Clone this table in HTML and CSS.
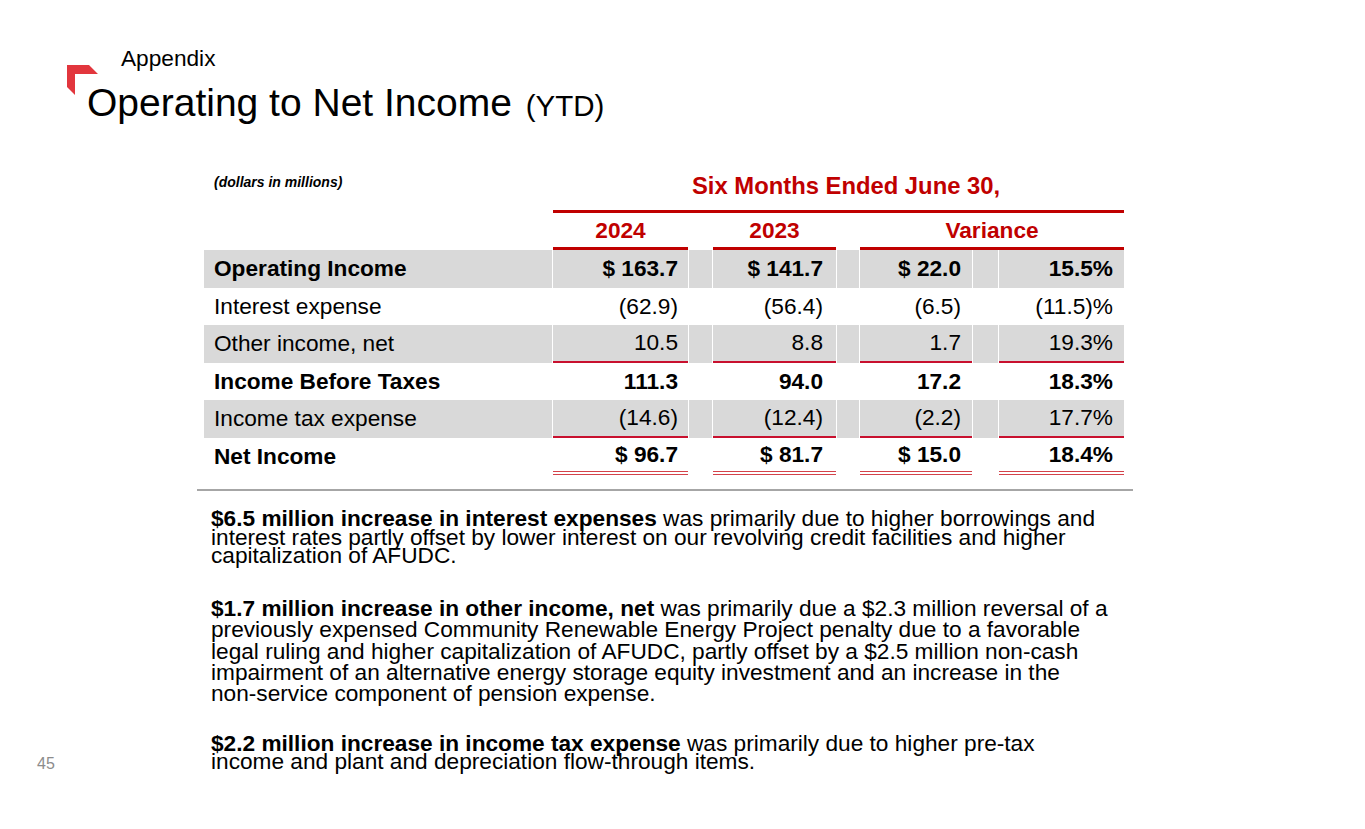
FILE: index.html
```html
<!DOCTYPE html>
<html lang="en">
<head>
<meta charset="utf-8">
<title>Operating to Net Income (YTD)</title>
<link rel="stylesheet" href="styles.css">
</head>
<body>
<div class="slide">
  <header class="head">
    <svg class="logo" width="33" height="33" viewBox="0 0 33 33" aria-hidden="true">
      <polygon points="1,1 23,1 32,10 9,10 9,31 1,23" fill="#e2363d"/>
    </svg>
    <div class="kicker">Appendix</div>
    <h1 class="title">Operating to Net Income <span class="ytd">(YTD)</span></h1>
  </header>

  <section class="fin">
    <div class="grid">
      <div class="units">(dollars in millions)</div>
      <div class="period">Six Months Ended June 30,</div>
      <div class="topline"></div>

      <div class="hd"></div>
      <div class="hd yr">2024</div>
      <div class="hd"></div>
      <div class="hd yr">2023</div>
      <div class="hd"></div>
      <div class="hd yr span2">Variance</div>

      <div class="c lab gray bold">Operating Income</div>
      <div class="c val v1 gray bold">$ 163.7</div>
      <div class="c gray"></div>
      <div class="c val v2 gray bold">$ 141.7</div>
      <div class="c gray"></div>
      <div class="c val gray bold">$ 22.0</div>
      <div class="c gray"></div>
      <div class="c val gray bold">15.5%</div>

      <div class="c lab">Interest expense</div>
      <div class="c val v1">(62.9)</div>
      <div class="c"></div>
      <div class="c val v2">(56.4)</div>
      <div class="c"></div>
      <div class="c val">(6.5)</div>
      <div class="c"></div>
      <div class="c val">(11.5)%</div>

      <div class="c lab gray">Other income, net</div>
      <div class="c val v1 gray ul">10.5</div>
      <div class="c gray"></div>
      <div class="c val v2 gray ul">8.8</div>
      <div class="c gray"></div>
      <div class="c val gray ul">1.7</div>
      <div class="c gray"></div>
      <div class="c val gray ul">19.3%</div>

      <div class="c lab bold">Income Before Taxes</div>
      <div class="c val v1 bold">111.3</div>
      <div class="c"></div>
      <div class="c val v2 bold">94.0</div>
      <div class="c"></div>
      <div class="c val bold">17.2</div>
      <div class="c"></div>
      <div class="c val bold">18.3%</div>

      <div class="c lab gray">Income tax expense</div>
      <div class="c val v1 gray ul">(14.6)</div>
      <div class="c gray"></div>
      <div class="c val v2 gray ul">(12.4)</div>
      <div class="c gray"></div>
      <div class="c val gray ul">(2.2)</div>
      <div class="c gray"></div>
      <div class="c val gray ul">17.7%</div>

      <div class="c lab bold">Net Income</div>
      <div class="c val v1 bold dbl">$ 96.7</div>
      <div class="c"></div>
      <div class="c val v2 bold dbl">$ 81.7</div>
      <div class="c"></div>
      <div class="c val bold dbl">$ 15.0</div>
      <div class="c"></div>
      <div class="c val bold dbl">18.4%</div>
    </div>
    <div class="rule"></div>
  </section>

  <section class="notes">
    <div class="pg">45</div>
    <div class="paras">
      <p class="p1"><b>$6.5 million increase in interest expenses</b> was primarily due to higher borrowings and<br>interest rates partly offset by lower interest on our revolving credit facilities and higher<br>capitalization of AFUDC.</p>
      <p class="p2"><b>$1.7 million increase in other income, net</b> was primarily due a $2.3 million reversal of a<br>previously expensed Community Renewable Energy Project penalty due to a favorable<br>legal ruling and higher capitalization of AFUDC, partly offset by a $2.5 million non-cash<br>impairment of an alternative energy storage equity investment and an increase in the<br>non-service component of pension expense.</p>
      <p class="p3"><b>$2.2 million increase in income tax expense</b> was primarily due to higher pre-tax<br>income and plant and depreciation flow-through items.</p>
    </div>
  </section>
</div>
</body>
</html>
```

FILE: styles.css
```css
* { box-sizing: border-box; }
html, body { margin: 0; padding: 0; background: #fff; }
body { font-family: "Liberation Sans", Arial, sans-serif; color: #000; }

.slide { width: 1365px; height: 829px; overflow: hidden; }

.head { position: relative; padding: 45px 0 0 87px; }
.logo { position: absolute; left: 66px; top: 64px; }
.kicker { margin-left: 34px; font-size: 22.67px; line-height: 26px; }
.title { margin: 10px 0 0; height: 44px; font-weight: normal; font-size: 39px; line-height: 44px; white-space: nowrap; }
.ytd { font-size: 29.5px; line-height: 0; margin-left: 3px; }

.fin { margin: 45px 0 0 204px; width: 920px; }
.grid {
  display: grid;
  grid-template-columns: 348px 135px 23px 123px 22px 112px 25px 125px;
  grid-template-rows: 40px 3px 37px repeat(6, 37.5px);
  column-gap: 1px;
}
.units { grid-column: 1; padding: 4px 0 0 10px; font-size: 14px; line-height: 16px; font-weight: bold; font-style: italic; }
.period { grid-column: 2 / 9; padding: 2px 0 0 139px; font-size: 23.8px; line-height: 28px; font-weight: bold; color: #c00000; white-space: nowrap; }
.topline { grid-column: 2 / 9; background: #c00000; }

.hd { display: flex; align-items: center; justify-content: center; font-size: 22.67px; font-weight: bold; color: #c00000; }
.hd.yr { border-bottom: 3px solid #c00000; padding-top: 1px; }
.hd.span2 { grid-column: 6 / 9; }

.c { display: flex; align-items: center; font-size: 22.67px; white-space: nowrap; }
.c.lab { padding-left: 10px; }
.c.val { justify-content: flex-end; padding-right: 11px; }
.c.v1 { padding-right: 10px; }
.c.v2 { padding-right: 13px; }
.gray { background: #d9d9d9; }
.bold { font-weight: bold; }
.ul { border-bottom: 2px solid #c8102e; }
.dbl { border-bottom: 4px double #d4424a; }

.rule { margin: 14px 0 0 -7px; width: 936px; height: 2px; background: #a6a6a6; }

.notes { display: flex; align-items: last baseline; padding-left: 37px; margin-top: 18px; }
.pg { width: 174px; flex: none; font-size: 16px; color: #8c8c8c; }
.paras { font-size: 22.67px; white-space: nowrap; }
.paras p { margin: 0; }
.p1 { line-height: 18.5px; }
.p2 { line-height: 21.3px; margin-top: 33.5px !important; }
.p3 { line-height: 18.5px; margin-top: 29.5px !important; }
```
